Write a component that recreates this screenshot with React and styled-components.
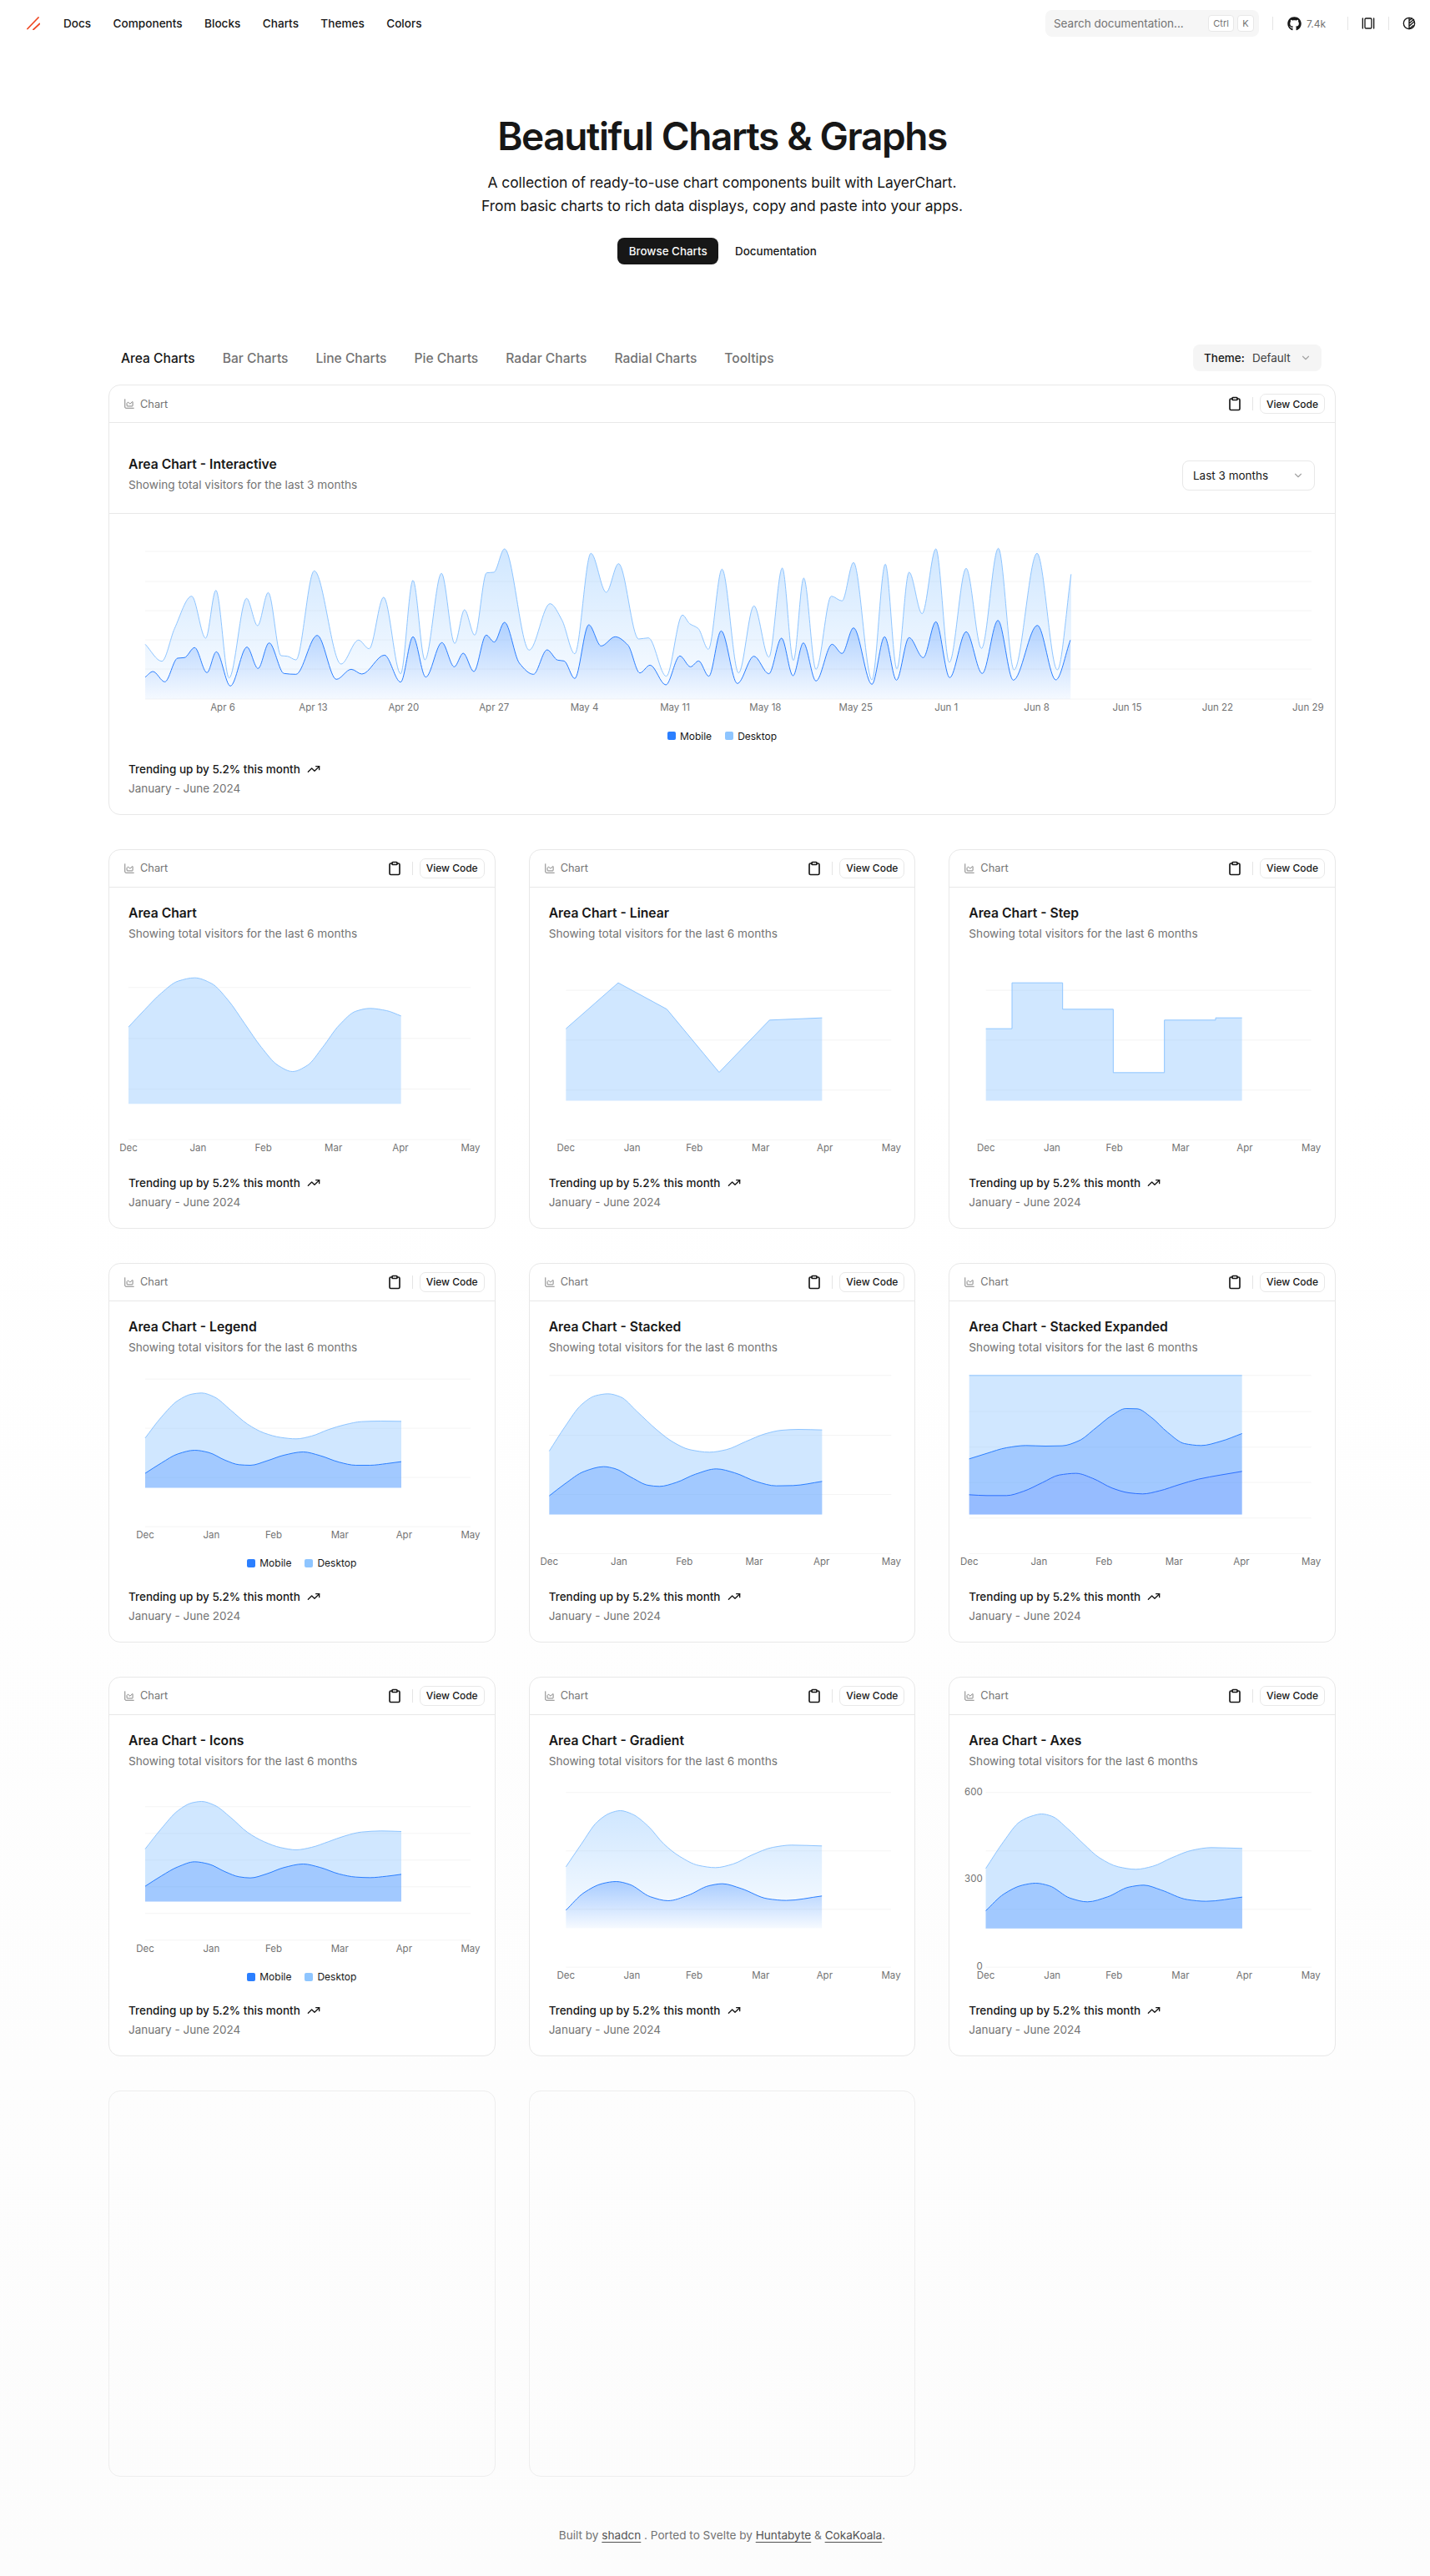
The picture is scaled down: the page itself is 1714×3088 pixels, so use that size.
import React from "react";
import styled, { createGlobalStyle } from "styled-components";
import {
  ChartArea,
  ChevronDown,
  Clipboard,
  GalleryHorizontal,
  TrendingUp,
} from "lucide-react";
import { FaGithub } from "react-icons/fa";

const GlobalStyle = createGlobalStyle`
  * { box-sizing: border-box; }
  html, body { margin: 0; padding: 0; }
  body {
    min-height: 3088px;
    background: linear-gradient(to bottom, #ffffff 0, #ffffff 1300px, #fcfcfc 100%);
    color: #171717;
    font-family: Inter, "Liberation Sans", sans-serif;
  }
`;

const MOBILE = "#2b7fff";
const DESKTOP = "#8ec5ff";

// ---------- header ----------
const Header = styled.header`
  height: 56px;
  display: flex;
  align-items: center;
  justify-content: space-between;
  padding: 0 17px 0 32px;
`;
const HeaderSide = styled.div`
  display: flex;
  align-items: center;
`;
const Logo = styled.svg`
  width: 16px;
  height: 16px;
  margin-right: 28px;
  flex: none;
`;
const NavLink = styled.a`
  font-size: 13.6px;
  font-weight: 500;
  color: #171717;
  margin-right: 26.4px;
`;
const Search = styled.div`
  width: 256px;
  height: 32px;
  background: #f6f6f6;
  border-radius: 8px;
  display: flex;
  align-items: center;
  padding: 0 6px 0 10px;
  gap: 4px;
`;
const SearchText = styled.span`
  flex: 1;
  font-size: 13.5px;
  color: #737373;
`;
const Kbd = styled.kbd`
  height: 20px;
  min-width: 20px;
  padding: 0 5px;
  display: flex;
  align-items: center;
  justify-content: center;
  font-family: inherit;
  font-size: 11px;
  color: #737373;
  background: #fff;
  border: 1px solid #e8e8e8;
  border-radius: 4px;
`;
const Rule = styled.span`
  width: 1px;
  height: 16px;
  background: #e5e5e5;
  margin: ${(p) => p.$margin || "0"};
  flex: none;
`;
const Stars = styled.span`
  display: flex;
  align-items: center;
  gap: 6px;
  font-size: 12px;
  color: #737373;
`;

// ---------- hero ----------
const Hero = styled.section`
  padding: 79px 0 0 17px;
  text-align: center;
`;
const Title = styled.h1`
  margin: 0;
  font-size: 46px;
  line-height: 56px;
  font-weight: 600;
  letter-spacing: -1.4px;
  color: #171717;
`;
const Lead = styled.p`
  margin: 14px 0 0;
  font-size: 17.5px;
  line-height: 28px;
  letter-spacing: -0.1px;
  color: #171717;
`;
const HeroButtons = styled.div`
  margin-top: 24px;
  display: flex;
  justify-content: center;
  gap: 8px;
`;
const HeroButton = styled.a`
  height: 32px;
  padding: 0 ${(p) => (p.$primary ? "13.5px" : "12px")};
  display: flex;
  align-items: center;
  border-radius: 8px;
  font-size: 13.4px;
  font-weight: 500;
  background: ${(p) => (p.$primary ? "#171717" : "transparent")};
  color: ${(p) => (p.$primary ? "#fafafa" : "#171717")};
`;

// ---------- page body ----------
const Main = styled.main`
  margin: 96px 113px 0 130px;
`;
const TabRow = styled.div`
  display: flex;
  align-items: center;
  justify-content: space-between;
  padding: 0 17px 0 15px;
  margin-bottom: 16px;
`;
const Tabs = styled.div`
  display: flex;
  gap: 33px;
`;
const Tab = styled.a`
  font-size: 15.6px;
  font-weight: 500;
  color: ${(p) => (p.$active ? "#171717" : "#737373")};
`;
const ThemePicker = styled.div`
  width: 154px;
  height: 32px;
  padding: 0 12px 0 13px;
  background: #f5f5f5;
  border-radius: 8px;
  display: flex;
  align-items: center;
  font-size: 13.5px;
  color: #404040;
`;
const ThemeLabel = styled.span`
  font-weight: 500;
  color: #171717;
  margin-right: 9px;
`;
const Grid = styled.div`
  display: grid;
  grid-template-columns: repeat(3, minmax(0, 1fr));
  column-gap: 40px;
  row-gap: 41px;
`;
const Card = styled.article`
  grid-column: ${(p) => (p.$wide ? "1 / -1" : "auto")};
  background: ${(p) => (p.$empty ? "transparent" : "#fff")};
  height: ${(p) => (p.$empty ? "463px" : "auto")};
  border: 1px solid ${(p) => (p.$empty ? "#eeeeee" : "#e8e8e8")};
  border-radius: 14px;
  overflow: hidden;
`;
const CardBar = styled.div`
  height: 45px;
  padding: 0 12px 0 17px;
  display: flex;
  align-items: center;
  justify-content: space-between;
  border-bottom: 1px solid #e8e8e8;
`;
const BarLabel = styled.span`
  display: flex;
  align-items: center;
  gap: 6px;
  font-size: 12.8px;
  color: #737373;
`;
const BarActions = styled.div`
  display: flex;
  align-items: center;
`;
const ViewCode = styled.a`
  height: 24px;
  width: 78px;
  display: flex;
  align-items: center;
  justify-content: center;
  border: 1px solid #e8e8e8;
  border-radius: 7px;
  font-size: 12px;
  font-weight: 500;
  color: #171717;
`;
const CardHead = styled.div`
  padding: ${(p) => (p.$wide ? "42px 24px 24px 23px" : "23px 23px 0")};
  display: flex;
  align-items: center;
  justify-content: space-between;
  border-bottom: ${(p) => (p.$wide ? "1px solid #e8e8e8" : "none")};
`;
const CardTitle = styled.h3`
  margin: 0 0 6px;
  font-size: 15.7px;
  line-height: 16px;
  font-weight: 600;
  color: #171717;
`;
const CardDesc = styled.p`
  margin: 0;
  font-size: 13.65px;
  line-height: 20px;
  color: #737373;
`;
const RangeSelect = styled.div`
  width: 159px;
  height: 36px;
  padding: 0 12px;
  display: flex;
  align-items: center;
  justify-content: space-between;
  border: 1px solid #e8e8e8;
  border-radius: 8px;
  font-size: 13.5px;
  color: #171717;
`;
const ChartSvg = styled.svg`
  display: block;
  width: 100%;
  height: ${(p) => p.$height}px;
`;
const AxisText = styled.text`
  font-size: 11.5px;
  fill: #737373;
  dominant-baseline: middle;
`;
const Legend = styled.div`
  height: 16px;
  margin: ${(p) => (p.$wide ? "4px 0 22px" : "6px 0 22.5px")};
  display: flex;
  justify-content: center;
  align-items: center;
  gap: 16px;
  font-size: 12px;
  color: #171717;
`;
const LegendItem = styled.span`
  display: flex;
  align-items: center;
  gap: 5px;
`;
const Swatch = styled.i`
  width: 10px;
  height: 10px;
  border-radius: 2px;
  background: ${(p) => p.$color};
`;
const CardFoot = styled.div`
  padding: 0 23px 20.5px;
`;
const Trend = styled.div`
  display: flex;
  align-items: center;
  gap: 8px;
  font-size: 13.5px;
  line-height: 20px;
  font-weight: 500;
  color: #171717;
`;
const Period = styled.div`
  margin-top: 3px;
  font-size: 13.5px;
  line-height: 20px;
  color: #737373;
`;
const PageFoot = styled.footer`
  margin-top: 60px;
  padding-left: 17px;
  text-align: center;
  font-size: 13.6px;
  line-height: 20px;
  color: #737373;
`;
const FootLink = styled.a`
  color: #525252;
  text-decoration: underline;
  text-underline-offset: 3px;
`;

// ---------- curves ----------
const monotonePath = (pts) => {
  const n = pts.length;
  const s = [];
  for (let i = 0; i < n - 1; i++) {
    s.push((pts[i + 1][1] - pts[i][1]) / (pts[i + 1][0] - pts[i][0]));
  }
  const m = pts.map((_, i) => {
    if (i === 0) return s[0];
    if (i === n - 1) return s[n - 2];
    if (s[i - 1] * s[i] <= 0) return 0;
    return (2 * s[i - 1] * s[i]) / (s[i - 1] + s[i]);
  });
  let d = `M${pts[0][0]},${pts[0][1]}`;
  for (let i = 0; i < n - 1; i++) {
    const h = (pts[i + 1][0] - pts[i][0]) / 3;
    d += `C${pts[i][0] + h},${pts[i][1] + m[i] * h} ${pts[i + 1][0] - h},${
      pts[i + 1][1] - m[i + 1] * h
    } ${pts[i + 1][0]},${pts[i + 1][1]}`;
  }
  return d;
};
const straightPath = (pts) =>
  "M" + pts.map((p) => `${p[0]},${p[1]}`).join("L");

// traced from the reference, in the units of the crop they were read from
const fromLeft = ([x, y]) => [x / 1.96 - 11, y / 3 - 16];
const fromRight = ([x, y]) => [x / 2.178 + 769, y / 3 - 16];
const desktopDaily = [
  ...[[106,517],[145,578],[175,460],[215,344],[248,495],[272,323],[303,638],[344,352],[370,450],[395,331],[425,558],[440,560],[460,573],[503,253],[566,588],[607,502],[632,533],[666,348],[706,623],[735,287],[763,573],[802,262],[833,514],[856,393],[880,484],[908,260],[925,258],[950,174],[1008,538],[1057,371],[1085,430],[1115,551],[1153,190],[1189,330],[1218,227],[1265,498],[1288,494],[1330,632],[1368,412],[1385,443],[1405,460],[1429,535],[1461,247],[1500,620]].map(fromLeft),
  ...[[8,379],[47,563],[82,243],[111,575],[138,279],[170,607],[210,344],[238,361],[268,223],[316,645],[351,229],[381,605],[413,258],[447,407],[483,174],[518,582],[562,244],[602,532],[646,172],[687,609],[747,190],[800,609],[836,265]].map(fromRight),
];
const mobileDaily = [
  ...[[106,635],[124,615],[152,652],[182,567],[198,565],[222,529],[251,619],[273,544],[306,667],[345,527],[371,604],[397,512],[432,622],[460,625],[510,485],[555,643],[590,607],[615,624],[668,556],[706,653],[735,490],[765,635],[803,511],[832,598],[853,549],[878,615],[907,484],[926,509],[950,438],[985,585],[1018,625],[1050,537],[1075,574],[1090,577],[1115,640],[1148,447],[1177,523],[1210,490],[1240,520],[1268,620],[1292,592],[1329,663],[1362,559],[1387,598],[1406,577],[1430,632],[1459,469],[1497,658]].map(fromLeft),
  ...[[8,560],[47,623],[80,495],[110,630],[137,512],[170,649],[212,517],[238,550],[268,458],[316,661],[349,490],[380,646],[413,493],[450,565],[483,436],[519,637],[562,472],[604,622],[645,431],[685,646],[748,449],[796,645],[834,502]].map(fromRight),
];

const MONTHS = ["Dec", "Jan", "Feb", "Mar", "Apr", "May"];
const DAYS = ["Apr 6","Apr 13","Apr 20","Apr 27","May 4","May 11","May 18","May 25","Jun 1","Jun 8","Jun 15","Jun 22","Jun 29"];

const solid = (pts, color, opacity, extra = {}) => ({ pts, color, opacity, ...extra });

const interactive = {
  key: "interactive",
  title: "Area Chart - Interactive",
  desc: "Showing total visitors for the last 3 months",
  wide: true,
  legend: true,
  height: 254,
  sx: 1, sy: 1, dx: 0, dy: 0,
  grid: [45, 81, 116, 151, 186, 222],
  gridX: [43, 1441],
  base: 222,
  labelY: 233,
  labels: DAYS.map((t, i) => [t, 136 + i * 108.4]),
  layers: [
    solid(desktopDaily, DESKTOP, 0, { fade: [0.42, 0.03] }),
    solid(mobileDaily, MOBILE, 0, { fade: [0.3, 0.03] }),
  ],
};

const smallCards = [
  {
    key: "plain",
    title: "Area Chart",
    height: 279.5,
    sx: 1 / 3, sy: 1 / 3, dx: 11, dy: 118.5,
    grid: [520, 703, 885, 1067],
    gridX: [102, 1332],
    base: 938,
    labelY: 1100,
    labels: [102, 352, 587, 839, 1080, 1332],
    layers: [
      solid([[102,662],[160,600],[220,540],[280,497],[340,485],[400,505],[460,565],[520,650],[580,735],[640,800],[692,822],[745,800],[800,735],[860,655],[920,605],[970,595],[1030,603],[1082,622]], DESKTOP, 0.42),
    ],
  },
  {
    key: "linear",
    title: "Area Chart - Linear",
    height: 279.5,
    sx: 1 / 3, sy: 1 / 3, dx: 14.67, dy: 118.5,
    grid: [530, 709, 889, 1068],
    gridX: [174, 1344],
    base: 927,
    labelY: 1100,
    labels: [174, 412, 636, 874, 1105, 1344],
    layers: [
      solid([[174,668],[362,503],[537,598],[725,825],[906,637],[1095,629]], DESKTOP, 0.42, { straight: true }),
    ],
  },
  {
    key: "step",
    title: "Area Chart - Step",
    height: 279.5,
    sx: 1 / 3, sy: 1 / 3, dx: 18.33, dy: 118.5,
    grid: [530, 709, 889, 1068],
    gridX: [186, 1356],
    base: 927,
    labelY: 1100,
    labels: [186, 424, 648, 886, 1117, 1356],
    layers: [
      solid([[186,668],[280,668],[280,503],[462,503],[462,598],[644,598],[644,826],[828,826],[828,637],[1012,637],[1012,629],[1107,629]], DESKTOP, 0.42, { straight: true }),
    ],
  },
  {
    key: "legend",
    title: "Area Chart - Legend",
    legend: true,
    height: 235,
    sx: 1 / 3, sy: 1 / 3, dx: 11, dy: 114.5,
    grid: [428, 605, 782, 959],
    gridX: [162, 1332],
    base: 819,
    labelY: 992,
    labels: [162, 400, 624, 862, 1093, 1332],
    layers: [
      solid([[162,640],[220,565],[280,505],[330,482],[365,478],[410,492],[470,540],[530,590],[590,622],[650,638],[705,643],[760,633],[820,610],[880,592],[940,581],[1010,579],[1083,580]], DESKTOP, 0.42),
      solid([[162,767],[220,730],[280,697],[340,684],[390,692],[450,720],[500,736],[540,738],[600,722],[660,702],[730,690],[790,703],[860,727],[920,738],[970,738],[1030,732],[1083,725]], MOBILE, 0.28),
    ],
  },
  {
    key: "stacked",
    title: "Area Chart - Stacked",
    height: 279.5,
    sx: 1 / 3, sy: 1 / 3, dx: 14.67, dy: 114.5,
    grid: [415, 630, 843, 1056],
    gridX: [114, 1344],
    base: 915,
    labelY: 1088,
    labels: [114, 365, 600, 851, 1093, 1344],
    layers: [
      solid([[114,687],[170,600],[230,520],[280,488],[325,481],[370,492],[430,545],[500,610],[560,655],[620,682],[690,691],[750,682],[820,653],[890,625],[950,612],[1010,609],[1095,611]], DESKTOP, 0.42),
      solid([[114,848],[170,805],[240,760],[310,743],[350,750],[410,782],[470,810],[510,814],[570,800],[640,770],[715,751],[780,765],[860,797],[930,812],[990,811],[1095,796]], MOBILE, 0.28),
    ],
  },
  {
    key: "expanded",
    title: "Area Chart - Stacked Expanded",
    height: 279.5,
    sx: 1 / 3, sy: 1 / 3, dx: 18.33, dy: 114.5,
    grid: [415, 545, 673, 800, 928, 1056],
    gridX: [126, 1356],
    base: 915,
    labelY: 1088,
    labels: [126, 377, 611, 863, 1105, 1356],
    layers: [
      solid([[126,415],[1107,415]], DESKTOP, 0.42),
      solid([[126,715],[190,695],[260,675],[330,667],[400,669],[460,668],[520,650],[580,605],[640,558],[690,534],[730,535],[780,565],[840,620],[900,660],[960,667],[1030,652],[1107,624]], MOBILE, 0.28),
      solid([[126,844],[190,847],[260,847],[320,832],[390,800],[450,773],[510,767],[570,785],[640,820],[700,837],[750,841],[810,830],[880,808],[950,788],[1030,773],[1107,760]], "#3f63ff", 0.12, { line: "#2b6fff" }),
    ],
  },
  {
    key: "icons",
    title: "Area Chart - Icons",
    legend: true,
    height: 235,
    sx: 1 / 3, sy: 1 / 3, dx: 11, dy: 110.5,
    grid: [466, 562, 658, 754, 850, 946],
    gridX: [162, 1332],
    base: 807,
    labelY: 980,
    labels: [162, 400, 624, 862, 1093, 1332],
    layers: [
      solid([[162,618],[220,545],[280,480],[330,452],[365,447],[410,460],[470,505],[530,558],[590,592],[650,613],[705,621],[760,612],[820,592],[880,571],[940,557],[1010,553],[1083,555]], DESKTOP, 0.42),
      solid([[162,752],[220,715],[280,682],[340,664],[390,672],[450,700],[500,718],[540,722],[600,707],[660,685],[730,672],[790,684],[860,708],[920,719],[970,721],[1030,716],[1083,709]], MOBILE, 0.28),
    ],
  },
  {
    key: "gradient",
    title: "Area Chart - Gradient",
    height: 279.5,
    sx: 1 / 1.568, sy: 1 / 3, dx: 14.67, dy: 110.5,
    grid: [415, 625, 835, 1043],
    gridX: [91, 702],
    base: 903,
    labelY: 1076,
    labels: [91, 215, 332, 457, 577, 702],
    layers: [
      solid([[91,682],[120,600],[150,520],[175,488],[193,480],[215,492],[245,535],[275,600],[305,645],[340,677],[372,685],[405,672],[440,640],[480,612],[515,604],[572,607]], DESKTOP, 0, { fade: [0.42, 0.04] }),
      solid([[91,838],[125,775],[160,742],[185,735],[210,745],[250,790],[283,804],[320,785],[360,750],[385,743],[420,760],[470,797],[505,803],[572,787]], MOBILE, 0, { fade: [0.34, 0.02] }),
    ],
  },
  {
    key: "axes",
    title: "Area Chart - Axes",
    height: 279.5,
    sx: 1 / 1.568, sy: 1 / 3, dx: 518.33, dy: 110.5,
    grid: [415, 625, 835, 1043],
    gridX: [881, 1493],
    base: 904,
    labelY: 1076,
    labels: [881, 1006, 1122, 1247, 1367, 1492],
    ticks: [["600", 416], ["300", 728], ["0", 1043]],
    tickX: 875,
    layers: [
      solid([[881,688],[915,590],[945,520],[970,498],[986,492],[1005,500],[1035,545],[1065,600],[1095,650],[1130,682],[1163,691],[1195,680],[1230,650],[1270,622],[1305,613],[1363,616]], DESKTOP, 0.42),
      solid([[881,840],[915,780],[950,748],[975,741],[1000,750],[1040,795],[1072,808],[1110,790],[1150,755],[1178,748],[1210,765],[1260,800],[1295,806],[1363,791]], MOBILE, 0.28),
    ],
  },
];

const AreaPlot = ({ chart }) => {
  const px = (x) => x * chart.sx - chart.dx;
  const py = (y) => y * chart.sy - chart.dy;
  const base = py(chart.base);
  const x0 = px(chart.gridX[0]);
  const x1 = px(chart.gridX[1]);

  return (
    <ChartSvg $height={chart.height}>
      <defs>
        {chart.layers.map(
          (layer, i) =>
            layer.fade && (
              <linearGradient key={i} id={`${chart.key}-${i}`} x1="0" y1="0" x2="0" y2="1">
                <stop offset="0" stopColor={layer.color} stopOpacity={layer.fade[0]} />
                <stop offset="1" stopColor={layer.color} stopOpacity={layer.fade[1]} />
              </linearGradient>
            )
        )}
      </defs>
      {chart.grid.map((y) => (
        <line key={y} x1={x0} x2={x1} y1={py(y)} y2={py(y)} stroke="#f4f4f4" strokeWidth="1" />
      ))}
      {chart.layers.map((layer, i) => {
        const pts = layer.pts.map(([x, y]) => [px(x), py(y)]);
        const line = layer.straight ? straightPath(pts) : monotonePath(pts);
        const first = pts[0];
        const last = pts[pts.length - 1];
        return (
          <g key={i}>
            <path
              d={`${line}L${last[0]},${base}L${first[0]},${base}Z`}
              fill={layer.fade ? `url(#${chart.key}-${i})` : layer.color}
              fillOpacity={layer.fade ? 1 : layer.opacity}
            />
            <path d={line} fill="none" stroke={layer.line || layer.color} strokeWidth="1" />
          </g>
        );
      })}
      {chart.labels.map((label, i) => {
        const [text, x] = Array.isArray(label) ? label : [MONTHS[i], px(label)];
        return (
          <AxisText key={text} x={x} y={py(chart.labelY)} textAnchor="middle">
            {text}
          </AxisText>
        );
      })}
      {chart.ticks &&
        chart.ticks.map(([text, y]) => (
          <AxisText key={text} x={px(chart.tickX)} y={py(y)} textAnchor="end">
            {text}
          </AxisText>
        ))}
    </ChartSvg>
  );
};

const ChartCard = ({ chart }) => (
  <Card $wide={chart.wide}>
    <CardBar>
      <BarLabel>
        <ChartArea size={14} strokeWidth={1.5} />
        Chart
      </BarLabel>
      <BarActions>
        <Clipboard size={18} strokeWidth={2.2} color="#171717" />
        <Rule $margin="0 8px 0 12px" />
        <ViewCode>View Code</ViewCode>
      </BarActions>
    </CardBar>
    <CardHead $wide={chart.wide}>
      <div>
        <CardTitle>{chart.title}</CardTitle>
        <CardDesc>{chart.desc || "Showing total visitors for the last 6 months"}</CardDesc>
      </div>
      {chart.wide && (
        <RangeSelect>
          Last 3 months
          <ChevronDown size={14} color="#a3a3a3" />
        </RangeSelect>
      )}
    </CardHead>
    <AreaPlot chart={chart} />
    {chart.legend && (
      <Legend $wide={chart.wide}>
        <LegendItem>
          <Swatch $color={MOBILE} />
          Mobile
        </LegendItem>
        <LegendItem>
          <Swatch $color={DESKTOP} />
          Desktop
        </LegendItem>
      </Legend>
    )}
    <CardFoot>
      <Trend>
        Trending up by 5.2% this month
        <TrendingUp size={16} strokeWidth={2} />
      </Trend>
      <Period>January - June 2024</Period>
    </CardFoot>
  </Card>
);

const ContrastIcon = () => (
  <svg width="16" height="16" viewBox="0 0 24 24" fill="none" stroke="#171717" strokeWidth="2" strokeLinecap="round">
    <circle cx="12" cy="12" r="10" />
    <path d="M12 2v20M12 7l5-4M12 12l8.5-7M12 17l9-8M12 22l7-6" />
  </svg>
);

const App = () => (
  <>
    <GlobalStyle />
    <Header>
      <HeaderSide>
        <Logo viewBox="0 0 16 16" fill="none" stroke="#ef4a25" strokeWidth="1.8" strokeLinecap="round">
          <path d="M14 1L1 14.5M15.5 8.5L8 15.5" />
        </Logo>
        {["Docs", "Components", "Blocks", "Charts", "Themes", "Colors"].map((item) => (
          <NavLink key={item}>{item}</NavLink>
        ))}
      </HeaderSide>
      <HeaderSide>
        <Search>
          <SearchText>Search documentation...</SearchText>
          <Kbd>Ctrl</Kbd>
          <Kbd>K</Kbd>
        </Search>
        <Rule $margin="0 17px 0 16px" />
        <Stars>
          <FaGithub size={17} color="#171717" />
          7.4k
        </Stars>
        <Rule $margin="0 16px 0 26px" />
        <GalleryHorizontal size={16} color="#171717" />
        <Rule $margin="0 16px" />
        <ContrastIcon />
      </HeaderSide>
    </Header>

    <Hero>
      <Title>Beautiful Charts &amp; Graphs</Title>
      <Lead>
        A collection of ready-to-use chart components built with LayerChart.
        <br />
        From basic charts to rich data displays, copy and paste into your apps.
      </Lead>
      <HeroButtons>
        <HeroButton $primary>Browse Charts</HeroButton>
        <HeroButton>Documentation</HeroButton>
      </HeroButtons>
    </Hero>

    <Main>
      <TabRow>
        <Tabs>
          {["Area Charts", "Bar Charts", "Line Charts", "Pie Charts", "Radar Charts", "Radial Charts", "Tooltips"].map(
            (tab, i) => (
              <Tab key={tab} $active={i === 0}>
                {tab}
              </Tab>
            )
          )}
        </Tabs>
        <ThemePicker>
          <ThemeLabel>Theme:</ThemeLabel>
          Default
          <ChevronDown size={14} color="#a3a3a3" style={{ marginLeft: "auto" }} />
        </ThemePicker>
      </TabRow>

      <Grid>
        <ChartCard chart={interactive} />
        {smallCards.map((chart) => (
          <ChartCard key={chart.key} chart={chart} />
        ))}
        <Card $empty />
        <Card $empty />
      </Grid>
    </Main>

    <PageFoot>
      Built by <FootLink>shadcn</FootLink> . Ported to Svelte by <FootLink>Huntabyte</FootLink> &amp;{" "}
      <FootLink>CokaKoala</FootLink>.
    </PageFoot>
  </>
);

export default App;
